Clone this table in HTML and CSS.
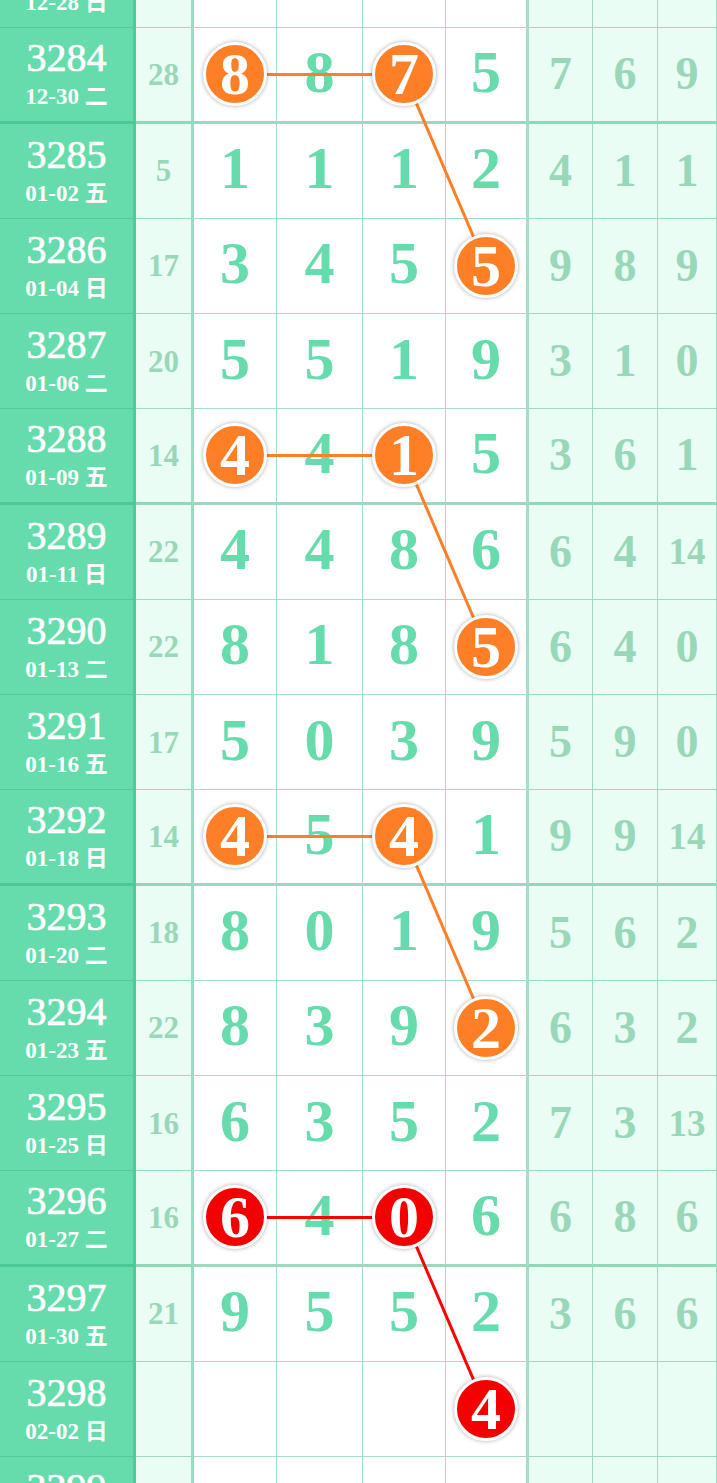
FILE: index.html
```html
<!DOCTYPE html>
<html>
<head lang="zh">
    <meta charset="UTF-8">
    <title>走势图</title>
    <link rel="stylesheet" href="styles.css">
</head>
<body>
<div class="chart">
    <div class="row">
        <div class="cell issue"><span class="no">3283</span><span class="date">12-28 日</span></div>
        <div class="cell sum"></div>
        <div class="cell"></div><div class="cell"></div><div class="cell"></div><div class="cell edge"></div>
        <div class="cell side"></div><div class="cell side"></div><div class="cell side"></div>
    </div>
    <div class="row thick">
        <div class="cell issue"><span class="no">3284</span><span class="date">12-30 二</span></div>
        <div class="cell sum">28</div>
        <div class="cell"><span class="ball">8</span></div><div class="cell"><span class="n">8</span></div><div class="cell"><span class="ball">7</span></div><div class="cell edge"><span class="n">5</span></div>
        <div class="cell side">7</div><div class="cell side">6</div><div class="cell side">9</div>
    </div>
    <div class="row">
        <div class="cell issue"><span class="no">3285</span><span class="date">01-02 五</span></div>
        <div class="cell sum">5</div>
        <div class="cell"><span class="n">1</span></div><div class="cell"><span class="n">1</span></div><div class="cell"><span class="n">1</span></div><div class="cell edge"><span class="n">2</span></div>
        <div class="cell side">4</div><div class="cell side">1</div><div class="cell side">1</div>
    </div>
    <div class="row">
        <div class="cell issue"><span class="no">3286</span><span class="date">01-04 日</span></div>
        <div class="cell sum">17</div>
        <div class="cell"><span class="n">3</span></div><div class="cell"><span class="n">4</span></div><div class="cell"><span class="n">5</span></div><div class="cell edge"><span class="ball">5</span></div>
        <div class="cell side">9</div><div class="cell side">8</div><div class="cell side">9</div>
    </div>
    <div class="row">
        <div class="cell issue"><span class="no">3287</span><span class="date">01-06 二</span></div>
        <div class="cell sum">20</div>
        <div class="cell"><span class="n">5</span></div><div class="cell"><span class="n">5</span></div><div class="cell"><span class="n">1</span></div><div class="cell edge"><span class="n">9</span></div>
        <div class="cell side">3</div><div class="cell side">1</div><div class="cell side">0</div>
    </div>
    <div class="row thick">
        <div class="cell issue"><span class="no">3288</span><span class="date">01-09 五</span></div>
        <div class="cell sum">14</div>
        <div class="cell"><span class="ball">4</span></div><div class="cell"><span class="n">4</span></div><div class="cell"><span class="ball">1</span></div><div class="cell edge"><span class="n">5</span></div>
        <div class="cell side">3</div><div class="cell side">6</div><div class="cell side">1</div>
    </div>
    <div class="row">
        <div class="cell issue"><span class="no">3289</span><span class="date">01-11 日</span></div>
        <div class="cell sum">22</div>
        <div class="cell"><span class="n">4</span></div><div class="cell"><span class="n">4</span></div><div class="cell"><span class="n">8</span></div><div class="cell edge"><span class="n">6</span></div>
        <div class="cell side">6</div><div class="cell side">4</div><div class="cell side sm">14</div>
    </div>
    <div class="row">
        <div class="cell issue"><span class="no">3290</span><span class="date">01-13 二</span></div>
        <div class="cell sum">22</div>
        <div class="cell"><span class="n">8</span></div><div class="cell"><span class="n">1</span></div><div class="cell"><span class="n">8</span></div><div class="cell edge"><span class="ball">5</span></div>
        <div class="cell side">6</div><div class="cell side">4</div><div class="cell side">0</div>
    </div>
    <div class="row">
        <div class="cell issue"><span class="no">3291</span><span class="date">01-16 五</span></div>
        <div class="cell sum">17</div>
        <div class="cell"><span class="n">5</span></div><div class="cell"><span class="n">0</span></div><div class="cell"><span class="n">3</span></div><div class="cell edge"><span class="n">9</span></div>
        <div class="cell side">5</div><div class="cell side">9</div><div class="cell side">0</div>
    </div>
    <div class="row thick">
        <div class="cell issue"><span class="no">3292</span><span class="date">01-18 日</span></div>
        <div class="cell sum">14</div>
        <div class="cell"><span class="ball">4</span></div><div class="cell"><span class="n">5</span></div><div class="cell"><span class="ball">4</span></div><div class="cell edge"><span class="n">1</span></div>
        <div class="cell side">9</div><div class="cell side">9</div><div class="cell side sm">14</div>
    </div>
    <div class="row">
        <div class="cell issue"><span class="no">3293</span><span class="date">01-20 二</span></div>
        <div class="cell sum">18</div>
        <div class="cell"><span class="n">8</span></div><div class="cell"><span class="n">0</span></div><div class="cell"><span class="n">1</span></div><div class="cell edge"><span class="n">9</span></div>
        <div class="cell side">5</div><div class="cell side">6</div><div class="cell side">2</div>
    </div>
    <div class="row">
        <div class="cell issue"><span class="no">3294</span><span class="date">01-23 五</span></div>
        <div class="cell sum">22</div>
        <div class="cell"><span class="n">8</span></div><div class="cell"><span class="n">3</span></div><div class="cell"><span class="n">9</span></div><div class="cell edge"><span class="ball">2</span></div>
        <div class="cell side">6</div><div class="cell side">3</div><div class="cell side">2</div>
    </div>
    <div class="row">
        <div class="cell issue"><span class="no">3295</span><span class="date">01-25 日</span></div>
        <div class="cell sum">16</div>
        <div class="cell"><span class="n">6</span></div><div class="cell"><span class="n">3</span></div><div class="cell"><span class="n">5</span></div><div class="cell edge"><span class="n">2</span></div>
        <div class="cell side">7</div><div class="cell side">3</div><div class="cell side sm">13</div>
    </div>
    <div class="row thick">
        <div class="cell issue"><span class="no">3296</span><span class="date">01-27 二</span></div>
        <div class="cell sum">16</div>
        <div class="cell"><span class="ball red">6</span></div><div class="cell"><span class="n">4</span></div><div class="cell"><span class="ball red">0</span></div><div class="cell edge"><span class="n">6</span></div>
        <div class="cell side">6</div><div class="cell side">8</div><div class="cell side">6</div>
    </div>
    <div class="row">
        <div class="cell issue"><span class="no">3297</span><span class="date">01-30 五</span></div>
        <div class="cell sum">21</div>
        <div class="cell"><span class="n">9</span></div><div class="cell"><span class="n">5</span></div><div class="cell"><span class="n">5</span></div><div class="cell edge"><span class="n">2</span></div>
        <div class="cell side">3</div><div class="cell side">6</div><div class="cell side">6</div>
    </div>
    <div class="row">
        <div class="cell issue"><span class="no">3298</span><span class="date">02-02 日</span></div>
        <div class="cell sum"></div>
        <div class="cell"></div><div class="cell"></div><div class="cell"></div><div class="cell edge"><span class="ball red">4</span></div>
        <div class="cell side"></div><div class="cell side"></div><div class="cell side"></div>
    </div>
    <div class="row">
        <div class="cell issue"><span class="no">3299</span><span class="date">02-04 二</span></div>
        <div class="cell sum"></div>
        <div class="cell"></div><div class="cell"></div><div class="cell"></div><div class="cell edge"></div>
        <div class="cell side"></div><div class="cell side"></div><div class="cell side"></div>
    </div>

    <!-- 连线 -->
    <svg class="links" width="717" height="1620" viewBox="0 0 717 1620">
        <g stroke="#ff7f27" stroke-width="3">
            <line x1="235" y1="141.4" x2="404" y2="141.4"/>
            <line x1="404" y1="141.4" x2="486" y2="332.9"/>
            <line x1="235" y1="522.4" x2="404" y2="522.4"/>
            <line x1="404" y1="522.4" x2="486" y2="713.9"/>
            <line x1="235" y1="903.4" x2="404" y2="903.4"/>
            <line x1="404" y1="903.4" x2="486" y2="1094.9"/>
        </g>
        <g stroke="#f00" stroke-width="3">
            <line x1="235" y1="1284.4" x2="404" y2="1284.4"/>
            <line x1="404" y1="1284.4" x2="486" y2="1475.9"/>
        </g>
    </svg>
</div>
</body>
</html>
```

FILE: styles.css
```css
html, body {
    margin: 0;
    padding: 0;
    overflow: hidden;
    background: #fff;
}

.chart {
    position: relative;
    width: 717px;
    margin-top: -67px;
    font-family: "Liberation Serif", "Noto Sans CJK SC", serif;
}

.row {
    display: grid;
    grid-template-columns: 136px 58px 83px 86px 83px 83px 64px 65px 59px;
    height: 95.25px;
}

.cell {
    box-sizing: border-box;
    display: flex;
    align-items: center;
    justify-content: center;
    border-right: 1px solid rgba(55, 180, 130, .45);
    border-bottom: 1px solid rgba(55, 180, 130, .45);
    font-weight: bold;
    line-height: 1;
}

.row.thick .cell {
    border-bottom: 3px solid rgba(55, 180, 130, .5);
}

.issue {
    flex-direction: column;
    background: #66dbab;
    color: #fff;
    border-right-width: 3px;
}

.issue .no {
    font-size: 40px;
    line-height: 40px;
    font-weight: normal;
    -webkit-text-stroke: 0.7px #fff;
}

.issue .date {
    margin-top: 6px;
    font-size: 23px;
    line-height: 26px;
}

.sum {
    background: #eafdf4;
    border-right-width: 3px;
    font-size: 31px;
    color: #99d7b9;
}

.edge {
    border-right-width: 3px;
}

.side {
    background: #eafdf4;
    font-size: 46px;
    color: #99d7b9;
}

.side.sm {
    font-size: 37px;
}

.n {
    font-size: 60px;
    color: #66dbab;
    margin-bottom: 5px;
}

.ball {
    position: relative;
    z-index: 2;
    box-sizing: border-box;
    width: 64px;
    height: 64px;
    display: flex;
    align-items: center;
    justify-content: center;
    border: 3px solid #fff;
    border-radius: 50%;
    background: #ff7f27;
    color: #fff;
    font-size: 60px;
    box-shadow: 0 0 4px rgba(0, 0, 0, .35);
}

.ball.red {
    background: #f50000;
}

.links {
    position: absolute;
    top: 0;
    left: 0;
    z-index: 1;
    pointer-events: none;
}
```
